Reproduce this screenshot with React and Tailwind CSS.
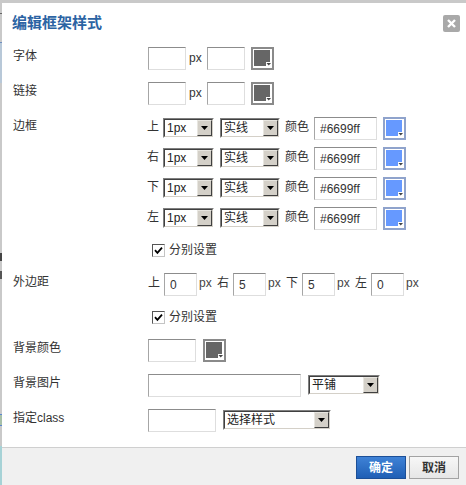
import React from "react";

const inputCls =
  "h-[23px] border border-t-[#8c8c8c] border-l-[#a6a6a6] border-b-[#dedede] border-r-[#dedede] bg-white px-[5px] text-[12px] text-[#333] outline-none shrink-0";

const Swatch = ({ color, border }) => (
  <div className={`w-[23px] h-[23px] border-2 bg-white shrink-0 ${border}`}>
    <svg width="19" height="19" viewBox="0 0 19 19" className="block">
      <polygon points="1,1 17,1 17,13 13,13 13,17 1,17" fill={color} />
      <polygon points="13.5,14 18,14 15.75,16.5" fill="#444" />
    </svg>
  </div>
);

const Select = ({ value, width }) => (
  <div
    className={`h-[20px] mt-[1px] border border-t-[#808080] border-l-[#808080] border-b-white border-r-white shrink-0 ${width}`}
  >
    <div className="h-full flex border border-t-[#404040] border-l-[#404040] border-b-[#d4d0c8] border-r-[#d4d0c8] bg-white">
      <span className="flex-1 pl-[2px] leading-[16px] text-[12px] text-[#222] overflow-hidden whitespace-nowrap">
        {value}
      </span>
      {/* dropdown button */}
      <div className="w-[15px] h-full border border-t-[#e8e6e0] border-l-[#e8e6e0] border-b-[#404040] border-r-[#404040] bg-[#d4d0c8] flex items-center justify-center">
        <svg width="7" height="4" viewBox="0 0 7 4">
          <polygon points="0,0 7,0 3.5,4" fill="#000" />
        </svg>
      </div>
    </div>
  </div>
);

const Checkbox = ({ label }) => (
  <div className="flex items-center h-[18px] pl-[4px]">
    <div className="w-[13px] h-[13px] border border-t-[#555] border-l-[#555] border-b-[#c4c4c4] border-r-[#c4c4c4] bg-white flex items-center justify-center">
      <svg width="9" height="9" viewBox="0 0 9 9">
        <path d="M1 4.2 L3.4 6.8 L8 1.6" stroke="#000" strokeWidth="1.8" fill="none" />
      </svg>
    </div>
    <span className="ml-[4px] text-[12px] text-[#333] leading-[18px]">{label}</span>
  </div>
);

const Row = ({ label, className = "", children }) => (
  <div className={`flex items-start ${className}`}>
    <div className="w-[135px] shrink-0 text-[12px] leading-[18px] text-[#333]">{label}</div>
    <div className="flex-1">{children}</div>
  </div>
);

const borderSides = ["上", "右", "下", "左"];
const margins = [
  { side: "上", value: "0" },
  { side: "右", value: "5" },
  { side: "下", value: "5" },
  { side: "左", value: "0" },
];

export default function App() {
  return (
    <div
      className="flex w-[466px] h-[485px] overflow-hidden bg-[#c9c9c9]"
      style={{ fontFamily: '"Liberation Sans", "Noto Sans CJK SC", sans-serif' }}
    >
      {/* page behind the dialog */}
      <div className="w-[2px] shrink-0 flex flex-col pt-[3px]">
        <div className="h-[10px]" />
        <div className="h-[1px] bg-[#666]" />
        <div className="h-[28px]" />
        <div className="h-[1px] bg-[#6f8fc0]" />
        <div className="h-[40px] bg-[#b8c8d8]" />
        <div className="h-[170px]" />
        <div className="h-[8px] bg-[#444]" />
        <div className="h-[10px]" />
        <div className="h-[8px] bg-[#555]" />
        <div className="h-[135px]" />
        <div className="h-[1px] bg-[#5a86d0]" />
        <div className="h-[10px] bg-[#a8c0a8]" />
        <div className="h-[1px] bg-[#5a86d0]" />
        <div className="h-[20px]" />
        <div className="flex-1 bg-[#a6d2d6]" />
      </div>

      <div className="flex-1 flex flex-col mt-[3px] bg-white">
        {/* header */}
        <div className="h-[37px] flex items-center justify-between pl-[10px] pr-[6px]">
          <span
            className="text-[15px] font-bold text-[#2b63a3] leading-[20px]"
            style={{ fontFamily: '"Noto Sans CJK SC", sans-serif' }}
          >
            编辑框架样式
          </span>
          <button className="mt-[4px] w-[17px] h-[17px] rounded-[2px] bg-[#a9a9a9] flex items-center justify-center">
            <svg width="9" height="9" viewBox="0 0 9 9">
              <path d="M1 1 L8 8 M8 1 L1 8" stroke="#fff" strokeWidth="2.4" />
            </svg>
          </button>
        </div>

        {/* body */}
        <div className="flex-1 pt-[7px] pl-[11px]">
          <Row label="字体">
            <div className="flex items-start">
              <input className={`${inputCls} w-[38px]`} readOnly />
              <span className="ml-[3px] w-[15px] text-[12px] leading-[23px] text-[#333]">px</span>
              <input className={`${inputCls} w-[38px] ml-[3px]`} readOnly />
              <div className="ml-[6px]">
                <Swatch color="#666666" border="border-[#8a8a8a]" />
              </div>
            </div>
          </Row>

          <Row label="链接" className="mt-[12px]">
            <div className="flex items-start">
              <input className={`${inputCls} w-[38px]`} readOnly />
              <span className="ml-[3px] w-[15px] text-[12px] leading-[23px] text-[#333]">px</span>
              <input className={`${inputCls} w-[38px] ml-[3px]`} readOnly />
              <div className="ml-[6px]">
                <Swatch color="#666666" border="border-[#8a8a8a]" />
              </div>
            </div>
          </Row>

          <Row label="边框" className="mt-[12px]">
            <div className="flex flex-col gap-[7px] -ml-[1px]">
              {borderSides.map((side) => (
                <div key={side} className="flex items-start h-[23px]">
                  <span className="w-[16px] text-[12px] leading-[21px] text-[#333]">{side}</span>
                  <Select value="1px" width="w-[51px]" />
                  <div className="ml-[6px]">
                    <Select value="实线" width="w-[60px]" />
                  </div>
                  <span className="ml-[5px] w-[29px] text-[12px] leading-[21px] text-[#333]">颜色</span>
                  <input className={`${inputCls} w-[63px]`} defaultValue="#6699ff" readOnly />
                  <div className="ml-[6px]">
                    <Swatch color="#6699ff" border="border-[#8fa3cc]" />
                  </div>
                </div>
              ))}
            </div>
          </Row>

          <Row className="mt-[11px]">
            <Checkbox label="分别设置" />
          </Row>

          <Row label="外边距" className="mt-[14px]">
            <div className="flex items-start">
              {margins.map((m) => (
                <React.Fragment key={m.side}>
                  <span className="w-[16px] text-[12px] leading-[21px] text-[#333]">{m.side}</span>
                  <input
                    className={`${inputCls} w-[33px] h-[22px] px-[4px]`}
                    defaultValue={m.value}
                    readOnly
                  />
                  <span className="ml-[2px] w-[18px] text-[12px] leading-[21px] text-[#444]">px</span>
                </React.Fragment>
              ))}
            </div>
          </Row>

          <Row className="mt-[12px]">
            <Checkbox label="分别设置" />
          </Row>

          <Row label="背景颜色" className="mt-[13px]">
            <div className="flex items-start">
              <input className={`${inputCls} w-[48px]`} readOnly />
              <div className="ml-[7px]">
                <Swatch color="#666666" border="border-[#8a8a8a]" />
              </div>
            </div>
          </Row>

          <Row label="背景图片" className="mt-[12px]">
            <div className="flex items-start">
              <input className={`${inputCls} w-[153px]`} readOnly />
              <div className="ml-[7px]">
                <Select value="平铺" width="w-[72px]" />
              </div>
            </div>
          </Row>

          <Row label="指定class" className="mt-[12px]">
            <div className="flex items-start">
              <input className={`${inputCls} w-[68px]`} readOnly />
              <div className="ml-[7px]">
                <Select value="选择样式" width="w-[108px]" />
              </div>
            </div>
          </Row>
        </div>

        {/* footer */}
        <div className="h-[38px] border-t border-[#cfcfcf] bg-[#f0f0f0] flex justify-end items-start pt-[8px] pr-[7px] gap-[3px]">
          <button className="w-[50px] h-[23px] border border-[#1c4f97] bg-gradient-to-b from-[#3f82d6] to-[#1f5fb5] text-white text-[12px] font-bold">
            确定
          </button>
          <button className="w-[50px] h-[23px] border border-[#a3a3a3] bg-gradient-to-b from-[#f7f7f7] to-[#e6e6e6] text-[#333] text-[12px] font-bold">
            取消
          </button>
        </div>
      </div>
    </div>
  );
}
